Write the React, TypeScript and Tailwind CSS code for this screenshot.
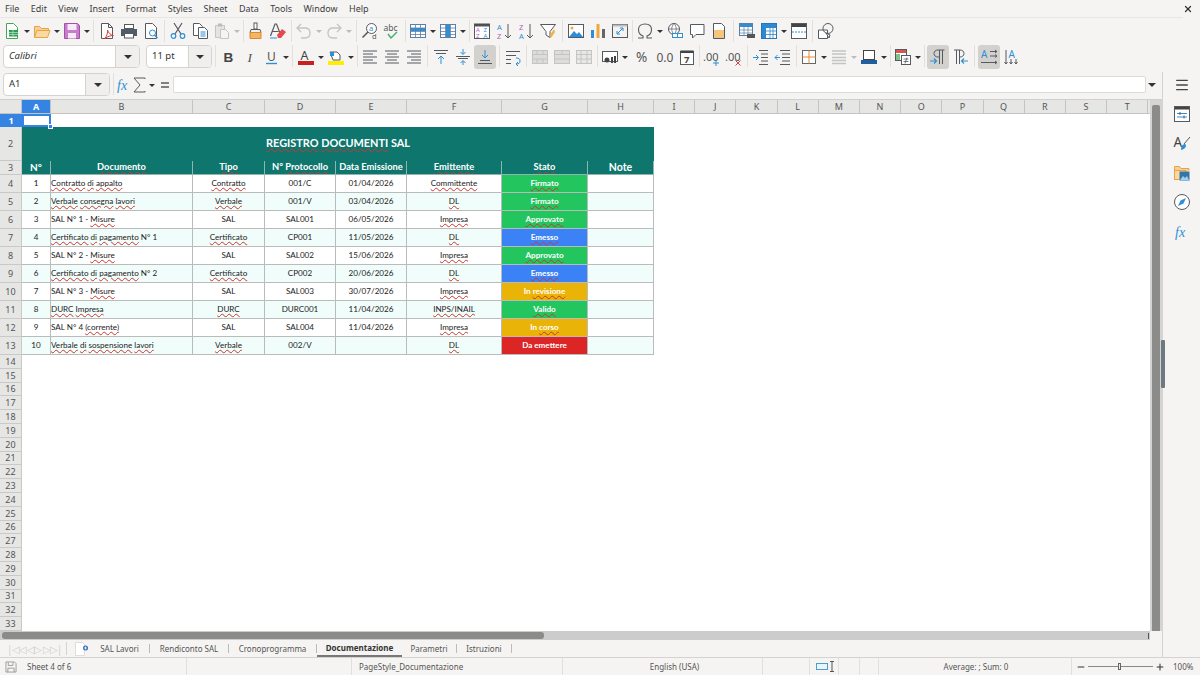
import React from 'react';
import { X, Menu, Minus, Plus } from 'lucide-react';

const ui = 'font-["Noto_Sans",sans-serif]';
const calibri = 'font-["Lato","Noto_Sans",sans-serif]';
const BLUE = '#2f8fd6';
const GRAY = '#555a60';
const PALE = '#c4c4c2';

const rect = (x: number, y: number, w: number, h: number, fill: string, stroke = 'none') => (
  <rect x={x} y={y} width={w} height={h} fill={fill} stroke={stroke} />
);

const grid = (hi: 'row' | 'col' | 'none', color = '#5a7fa8') => (
  <>
    {rect(1.5, 2.5, 15, 13, '#fff', color)}
    {hi === 'row' && rect(2, 6, 14, 3, BLUE)}
    {hi === 'col' && rect(7, 3, 4, 12, BLUE)}
    <path d="M1.5 6h15M1.5 9.500h15M1.500 12.500h15M6.500 2.500v13M11.500 2.500v13" stroke={color} fill="none" strokeWidth=".8" />
  </>
);

const lines = (ys: number[], xs: [number, number][], c = GRAY) => (
  <path d={ys.map((y, i) => `M${xs[i][0]} ${y}H${xs[i][1]}`).join('')} stroke={c} fill="none" />
);

const icons: Record<string, React.ReactNode> = {
  new: <><path d="M3.500 1.500h7l4 4v11h-11z" fill="#fff" stroke="#46a35a" />{rect(6, 8, 9, 6.500, '#2f9e52')}<path d="M6 10.500h9M6 12.500h9M10 8v6.500" stroke="#bfe8c8" strokeWidth=".7" /></>,
  open: <><path d="M1.500 15.500v-11h5l2 2h7v2" fill="#f7cf91" stroke="#e5a449" /><path d="M1.500 15.500l2.500-7h13l-2.500 7z" fill="#fbd9a3" stroke="#e5a449" /></>,
  save: <><path d="M1.500 1.500h13l2 2v13h-15z" fill="#c77dcb" stroke="#a450aa" />{rect(4.500, 2, 9, 6, '#f8eaf8')}{rect(5, 11, 8, 5.500, '#f8eaf8')}</>,
  pdf: <><path d="M3.500 1.500h7l4 4v11h-11z" fill="#fff" stroke={GRAY} /><path d="M10.500 1.500v4h4" fill="none" stroke={GRAY} /><path d="M7 16c2-2 3-6 2.500-8 1 3 3 5 6 5.500-3 0-6 1-8.500 3z" fill="none" stroke="#d9413e" /></>,
  print: <>{rect(4.500, 2.500, 9, 4, '#fff', GRAY)}<path d="M1 7h16v7h-3v-2H4v2H1z" fill="#4f5c68" />{rect(4.500, 11.500, 9, 4.500, '#fff', GRAY)}</>,
  preview: <><path d="M3.500 1.500h7l4 4v11h-11z" fill="#fff" stroke={GRAY} /><circle cx="10.500" cy="11" r="3" fill="#fff" stroke={BLUE} /><path d="M12.500 13l3 3" stroke={BLUE} strokeWidth="1.500" /></>,
  cut: <><path d="M5 1l7 11M13 1L6 12" stroke={GRAY} strokeWidth="1.200" /><circle cx="4.500" cy="14" r="2.300" fill="none" stroke={BLUE} strokeWidth="1.200" /><circle cx="13.500" cy="14" r="2.300" fill="none" stroke={BLUE} strokeWidth="1.200" /></>,
  copy: <><path d="M2.500 1.500h6l3 3v9h-9z" fill="#fff" stroke={GRAY} /><path d="M7.500 5.500h6l3 3v8h-9z" fill="#fff" stroke={GRAY} /><path d="M9.500 10h5M9.500 12h5M9.500 14h5" stroke={BLUE} /></>,
  paste: <><path d="M2.500 3.500h9v12h-9z" fill="#e4e4e2" stroke={PALE} />{rect(5, 1.500, 4, 3, '#bbb')}<path d="M7.500 7.500h5l3 3v6h-8z" fill="#f4f4f2" stroke={PALE} /></>,
  clone: <>{rect(7, 1, 3, 6, '#fff', GRAY)}<path d="M4 7.500h9l1 3H3z" fill="#f4f0e8" stroke={GRAY} /><path d="M3 10.500h11v6H3z" fill="#f4b565" stroke="#d98b2b" /></>,
  clear: <><path d="M1.500 14L6 2h1.500L11 11M3.500 9.500h6" fill="none" stroke={GRAY} strokeWidth="1.200" /><path d="M8 13l5-6 4 3-5 6H9z" fill="#e5484d" /><path d="M1 16h7" stroke={BLUE} /></>,
  undo: <path d="M6 2L2 6l4 4M2 6h8c3 0 5 2 5 5s-2 5-5 5H6" fill="none" stroke={PALE} strokeWidth="1.300" />,
  redo: <path d="M12 2l4 4-4 4M16 6H8c-3 0-5 2-5 5s2 5 5 5h4" fill="none" stroke={PALE} strokeWidth="1.300" />,
  find: <><circle cx="10.500" cy="6.500" r="5" fill="#fff" stroke={GRAY} /><path d="M7 10l-5.500 5.500" stroke={GRAY} strokeWidth="1.600" /><text x="8" y="9" fontSize="7.500" fill={BLUE} fontFamily="Noto Sans">a</text><text x="11" y="17" fontSize="7.500" fill={GRAY} fontFamily="Noto Sans">d</text></>,
  spell: <><text x="0.500" y="9" fontSize="8.500" fill={GRAY} fontFamily="Noto Sans">abc</text><path d="M5 12l3 4 6-6" fill="none" stroke="#3fae6a" strokeWidth="1.400" /></>,
  rows: grid('row'),
  cols: grid('col'),
  sortcol: <>{rect(1, 1.500, 16, 3, '#4d4d4d')}{rect(1.500, 4, 15, 12.500, '#fff', GRAY)}<text x="3" y="10" fontSize="6" fill="#b558c0" fontFamily="Noto Sans">A</text><text x="3" y="16" fontSize="6" fill="#b558c0" fontFamily="Noto Sans">Z</text><text x="10.500" y="10" fontSize="6" fill={BLUE} fontFamily="Noto Sans">Z</text><text x="10.500" y="16" fontSize="6" fill={BLUE} fontFamily="Noto Sans">A</text></>,
  az: <><text x="2" y="8" fontSize="7.500" fill={BLUE} fontFamily="Noto Sans">A</text><text x="2" y="16.500" fontSize="7.500" fill="#b558c0" fontFamily="Noto Sans">Z</text><path d="M13 2v14M10 13l3 3 3-3" fill="none" stroke={GRAY} /></>,
  za: <><text x="2" y="8" fontSize="7.500" fill="#b558c0" fontFamily="Noto Sans">Z</text><text x="2" y="16.500" fontSize="7.500" fill={BLUE} fontFamily="Noto Sans">A</text><path d="M13 2v14M10 13l3 3 3-3" fill="none" stroke={GRAY} /></>,
  filter: <><path d="M1.500 2.500h15l-5.500 7v6l-4-2.500V9.500z" fill="#fff" stroke={GRAY} /><path d="M15 7l-4 6 1 3 4-6z" fill="#f3b23f" /></>,
  image: <>{rect(1.500, 2.500, 15, 13, '#fff', GRAY)}<path d="M2 15l5-6 3 3 2-2 4 5z" fill={BLUE} /><circle cx="5" cy="6" r="1.500" fill="#f2a93b" /></>,
  chart: <>{rect(2, 8, 3, 8, BLUE)}{rect(7.500, 2, 3, 14, '#f0a63c')}{rect(13, 7, 3, 9, '#666')}</>,
  pivot: <>{rect(1.500, 2.500, 15, 13, '#f3f3f2', GRAY)}{rect(1.500, 2.500, 15, 2, '#bbb')}<path d="M6 12l6-6M12 6H9M12 6v3M6 12h3M6 12V9" fill="none" stroke={BLUE} /></>,
  omega: <path d="M2 16h5v-2c-3-1-4.500-3.500-4.500-6.500C2.500 4 5 2 9 2s6.500 2 6.500 5.500c0 3-1.500 5.500-4.500 6.500v2h5" fill="none" stroke={GRAY} strokeWidth="1.100" />,
  link: <><circle cx="8" cy="7" r="5.500" fill="#fff" stroke={GRAY} /><path d="M2.500 7h11M8 1.500c-3 3-3 8 0 11M8 1.500c3 3 3 8 0 11" fill="none" stroke={GRAY} strokeWidth=".7" />{rect(6.500, 11.500, 5, 4, '#fff', BLUE)}{rect(11.500, 11.500, 5, 4, '#fff', BLUE)}</>,
  comment: <path d="M2.500 2.500h13.500v10H8l-3.500 3.500V12.500h-2z" fill="#fff" stroke={GRAY} />,
  header: <><path d="M3.500 1.500h8l3 3v12h-11z" fill="#fff" stroke={GRAY} />{rect(4, 8, 10, 8, '#f6c57e')}</>,
  printarea: <>{rect(1.500, 1.500, 13, 12, '#fff', '#5a7fa8')}{rect(2, 2, 12, 3, BLUE)}<path d="M1.500 8h13M1.500 11h13M6 2v11M10 2v11" stroke="#5a7fa8" strokeWidth=".7" /><path d="M9 12h8v4H9z" fill="#555" /></>,
  freeze: <>{rect(1.500, 1.500, 15, 15, '#fff', '#2c75b5')}{rect(2, 2, 14, 4, '#2c88d0')}{rect(2, 2, 4, 14, '#2c88d0')}<path d="M6 9h10M6 12.500h10M10 6v10M13 6v10" stroke="#2c88d0" strokeWidth=".8" /></>,
  split: <>{rect(1.500, 1.500, 15, 15, '#fff', GRAY)}{rect(2, 2, 14, 3, '#444')}<path d="M2 10h14" stroke={BLUE} strokeDasharray="2 1" /></>,
  shapes: <><path d="M1.500 8h9v8.500h-9z" fill="#fff" stroke={GRAY} /><circle cx="11" cy="6.500" r="5" fill="none" stroke={GRAY} /><path d="M9 11l4 2-1 3z" fill="#fff" stroke={GRAY} /></>,
  bold: <text x="3.500" y="14" fontSize="13.500" fontWeight="700" fill="#444" fontFamily="Liberation Sans">B</text>,
  italic: <text x="5.500" y="14" fontSize="13.500" fontStyle="italic" fill="#555" fontFamily="Liberation Serif">I</text>,
  under: <><text x="4" y="12.500" fontSize="12" fill="#555" fontFamily="Noto Sans">U</text><path d="M3 15.500h11" stroke={BLUE} strokeWidth="1.400" /></>,
  fcolor: <><text x="3.500" y="12" fontSize="12.500" fill="#444" fontFamily="Noto Sans">A</text>{rect(1, 13, 16, 4, '#c9211e')}</>,
  hcolor: <><path d="M3 4h7l3 3v5H6z" fill="#fff" stroke={GRAY} />{rect(3, 4, 4, 4, BLUE)}{rect(1, 13, 16, 4, '#ffee00')}</>,
  left: lines([3, 6, 9, 12, 15], [[2, 16], [2, 12], [2, 16], [2, 12], [2, 16]]),
  center: lines([3, 6, 9, 12, 15], [[2, 16], [4, 14], [2, 16], [4, 14], [2, 16]]),
  right: lines([3, 6, 9, 12, 15], [[2, 16], [6, 16], [2, 16], [6, 16], [2, 16]]),
  vtop: <><path d="M2 2.500h14M4 5.500h10" stroke={GRAY} /><path d="M9 16V8M6 11l3-3 3 3" fill="none" stroke={BLUE} /></>,
  vmid: <><path d="M2 8.500h14M4 10.500h10" stroke={GRAY} /><path d="M9 1v5M6.500 4L9 6.500 11.500 4M9 17v-4M6.500 15L9 12.500l2.500 2.500" fill="none" stroke={BLUE} /></>,
  vbot: <><path d="M2 15.500h14M4 12.500h10" stroke={GRAY} /><path d="M9 2v8M6 7l3 3 3-3" fill="none" stroke={BLUE} /></>,
  wrap: <><path d="M2 3.500h14M2 7.500h10M2 11.500h5M2 15.500h5" stroke={GRAY} /><path d="M12 10c3 0 4 1 4 3s-1 3-4 3M14 14l-2 2 2 2" fill="none" stroke={BLUE} /></>,
  merge: <>{rect(1.500, 2.500, 15, 13, '#dcdcda', PALE)}<path d="M1.500 6.500h15M1.500 11h15M6 2.500v4M12 2.500v4M6 11v4.500M12 11v4.500" stroke={PALE} /></>,
  merge2: <>{rect(1.500, 2.500, 15, 13, '#dcdcda', PALE)}<path d="M1.500 6.500h15M1.500 11h15M9 2.500v4" stroke={PALE} /></>,
  merge3: <>{rect(1.500, 2.500, 15, 13, '#e8e8e6', PALE)}<path d="M1.500 6.500h15M1.500 11h15M6 2.500v13M12 2.500v13" stroke={PALE} /></>,
  money: <>{rect(1.500, 3.500, 15, 10, '#fff', GRAY)}<circle cx="6" cy="12" r="2.500" fill="#444" />{rect(10, 9, 2, 6, '#444')}{rect(13, 8, 2, 7, '#444')}</>,
  percent: <text x="2" y="14" fontSize="13.500" fill="#555" fontFamily="Noto Sans">%</text>,
  number: <text x="0.500" y="14" fontSize="12" fill="#555" fontFamily="Noto Sans">0.0</text>,
  date: <>{rect(2.500, 3.500, 13, 13, '#fff', GRAY)}{rect(2.500, 2.500, 13, 2.500, '#444')}<text x="6" y="14.500" fontSize="9.500" fontWeight="700" fill="#444" fontFamily="Noto Sans">7</text></>,
  decadd: <><text x="0" y="13" fontSize="11" fill="#555" fontFamily="Noto Sans">.00</text><path d="M13 12v6M10 15h6" stroke={BLUE} /></>,
  decdel: <><text x="0" y="13" fontSize="11" fill="#555" fontFamily="Noto Sans">.00</text><path d="M10.500 12.500l5 5M15.500 12.500l-5 5" stroke="#d9413e" /></>,
  indent: <><path d="M7 2.500h9M9 6h7M9 9.500h7M9 13h7M7 16.500h9" stroke={GRAY} /><path d="M1 9.500h5M4 7l2.500 2.500L4 12" fill="none" stroke={BLUE} /></>,
  outdent: <><path d="M2 2.500h10M4 6h8M4 9.500h8M4 13h8M2 16.500h10" stroke={GRAY} transform="translate(4 0)" /><path d="M6 9.500H1M3.500 7L1 9.500 3.500 12" fill="none" stroke={BLUE} /></>,
  border: <>{rect(2.500, 2.500, 13, 13, '#fff', '#666')}<path d="M9 2.500v13M2.500 9h13" stroke="#e58a3a" /></>,
  bstyle: <path d="M2 3h14M2 6h14M2 9.500h14M2 12.500h14M2 15.500h14" stroke={PALE} strokeWidth="1.300" />,
  bcolor: <>{rect(3.500, 2.500, 11, 9, '#fff', '#444')}{rect(1, 12, 16, 4, '#1f5fa0')}</>,
  cond: <>{rect(1.500, 1.500, 11, 11, '#fff', GRAY)}{rect(2, 2, 10, 3, '#d9534f')}{rect(2, 6, 4, 6, '#7cc48a')}{rect(7.500, 7.500, 9, 9, '#fff', GRAY)}<path d="M9.500 11h5M9.500 13.500h5M13 9.500l-2 6" stroke={GRAY} strokeWidth=".8" /></>,
  ltr: <><path d="M10.500 2v14M13.500 2v14M15.500 2H9c-2.500 0-4 1.500-4 3.500S6.500 9 9 9h1.500" fill="none" stroke={GRAY} /><path d="M1 13h6M5 10.500L7.500 13 5 15.500" fill="none" stroke={BLUE} strokeWidth="1.200" /></>,
  rtl: <><path d="M8.500 2v14M5.500 2v14M3 2h6c2.500 0 4 1.500 4 3.500S11.500 9 9 9" fill="none" stroke={GRAY} /><path d="M17 13h-6M13 10.500L10.500 13l2.500 2.500" fill="none" stroke={BLUE} strokeWidth="1.200" /></>,
  horiz: <><text x="1" y="10" fontSize="10" fill={BLUE} fontFamily="Noto Sans">A</text><path d="M10 3.500h7M10 8h7M1 14.500h16M15 2l2 1.500L15 5M15 6.500L17 8l-2 1.500M15 13l2 1.500-2 1.500" fill="none" stroke={GRAY} /></>,
  vert: <><text x="6.500" y="10" fontSize="10" fill={BLUE} fontFamily="Noto Sans">A</text><path d="M4 2v14M2.500 14L4 16l1.500-2M9 11v5M7.500 14L9 16l1.500-2M14 11v5M12.500 14l1.500 2 1.500-2" fill="none" stroke={GRAY} /></>,
  fx: <text x="2" y="14" fontSize="14" fontStyle="italic" fill={BLUE} fontFamily="Liberation Serif">fx</text>,
  sum: <path d="M14 3V2H3l6 7-6 7h11v-1" fill="none" stroke={GRAY} />,
  equals: <path d="M5 7h8M5 11h8" stroke={GRAY} strokeWidth="1.500" />,
  props: <>{rect(1.500, 1.500, 15, 15, '#fff', GRAY)}{rect(2, 2, 14, 2.500, '#444')}<path d="M4 8.500h10M4 12h10" stroke={BLUE} /><path d="M7 7v3M11 10.500v3" stroke={GRAY} /></>,
  styles: <><text x="0.500" y="13" fontSize="13.500" fill="#444" fontFamily="Noto Sans">A</text><path d="M17 3l-6 7" stroke={GRAY} /><path d="M8 16c0-4 2-6 4-6 2 1 1 5-4 6z" fill={BLUE} /></>,
  gallery: <><path d="M1.500 15.500v-13h5l1.500 2h8v2" fill="#f7cf91" stroke="#e5a449" />{rect(1.500, 6.500, 11, 9, '#fbd9a3', '#e5a449')}{rect(6.500, 7.500, 10, 9, '#3377aa')}<path d="M7 16l3-4 2 2 2-2 2 4z" fill="#9fd0ee" /></>,
  nav: <><circle cx="9" cy="9" r="7.500" fill="#fff" stroke={GRAY} /><path d="M13 5l-2.500 5.500L5 13l2.500-5.500z" fill={BLUE} /></>,
  floppy: <><path d="M2.500 2.500h11l2 2v11h-13z" fill="none" stroke="#8a8a88" /><path d="M5.500 3v4h6V3M5 15.500v-5h8v5" fill="none" stroke="#8a8a88" /></>,
};

function Ic({ n, size = 18 }: { n: string; size?: number }) {
  return <svg width={size} height={size} viewBox="0 0 18 18" className="shrink-0">{icons[n]}</svg>;
}

function Btn({ n, on, w = 22 }: { n: string; on?: boolean; w?: number }) {
  return (
    <div style={{ width: w }} className={`h-[24px] flex items-center justify-center shrink-0 rounded-[3px] ${on ? 'bg-[#d3d1ce]' : ''}`}>
      <Ic n={n} />
    </div>
  );
}

function Dd({ pale }: { pale?: boolean }) {
  return (
    <div className="w-[8px] h-[24px] flex items-center justify-center shrink-0">
      <div className={`w-0 h-0 border-x-[3px] border-x-transparent border-t-[3px] ${pale ? 'border-t-[#bbb]' : 'border-t-[#333]'}`} />
    </div>
  );
}

function Sep({ w = 5 }: { w?: number }) {
  return (
    <div style={{ width: w }} className="h-[22px] flex justify-center shrink-0">
      <div className="w-px h-full bg-[#e2e0dd]" />
    </div>
  );
}

function Combo({ label, italic, cls, btn }: { label: string; italic?: boolean; cls: string; btn: string }) {
  return (
    <div className={`${cls} h-[23px] flex shrink-0 border border-[#d5d3cf] rounded-[4px] overflow-hidden bg-white`}>
      <div className={`flex-1 flex items-center pl-[5px] text-[9.500px] text-[#333] ${italic ? 'italic' : ''}`}>{label}</div>
      <div className={`${btn} bg-[#f0efed] border-l border-[#d5d3cf] flex items-center justify-center`}>
        <div className="w-0 h-0 border-x-[4px] border-x-transparent border-t-[4px] border-t-[#333]" />
      </div>
    </div>
  );
}

// ~ in front of a word puts the spell check underline on it
function Words({ t }: { t: string }) {
  return (
    <>
      {t.split(' ').map((w, i) => (
        <React.Fragment key={i}>
          {i > 0 && ' '}
          {w.startsWith('~')
            ? <span className="underline decoration-wavy decoration-[#d0342c] decoration-1 underline-offset-[1px]">{w.slice(1)}</span>
            : w}
        </React.Fragment>
      ))}
    </>
  );
}

const MENU = ['File', 'Edit', 'View', 'Insert', 'Format', 'Styles', 'Sheet', 'Data', 'Tools', 'Window', 'Help'];
const LETTERS = ['I', 'J', 'K', 'L', 'M', 'N', 'O', 'P', 'Q', 'R', 'S', 'T'];

const GREEN = 'bg-[#22c55e]';
const BLUEC = 'bg-[#3b82f6]';
const AMBER = 'bg-[#eab308]';
const RED = 'bg-[#dc2626]';

const ROWS = [
  ['~Contratto ~di ~appalto', '~Contratto', '001/C', '01/04/2026', '~Committente', '~Firmato', GREEN],
  ['~Verbale ~consegna ~lavori', '~Verbale', '001/V', '03/04/2026', '~DL', '~Firmato', GREEN],
  ['SAL N° 1 - ~Misure', 'SAL', 'SAL001', '06/05/2026', '~Impresa', '~Approvato', GREEN],
  ['~Certificato ~di ~pagamento N° 1', '~Certificato', 'CP001', '11/05/2026', '~DL', '~Emesso', BLUEC],
  ['SAL N° 2 - ~Misure', 'SAL', 'SAL002', '15/06/2026', '~Impresa', '~Approvato', GREEN],
  ['~Certificato ~di ~pagamento N° 2', '~Certificato', 'CP002', '20/06/2026', '~DL', '~Emesso', BLUEC],
  ['SAL N° 3 - ~Misure', 'SAL', 'SAL003', '30/07/2026', '~Impresa', 'In ~revisione', AMBER],
  ['~DURC ~Impresa', '~DURC', 'DURC001', '11/04/2026', '~INPS/INAIL', '~Valido', GREEN],
  ['SAL N° 4 ~(corrente)', 'SAL', 'SAL004', '11/04/2026', '~Impresa', 'In ~corso', AMBER],
  ['~Verbale ~di ~sospensione ~lavori', '~Verbale', '002/V', '', '~DL', 'Da emettere', RED],
];

const TEMPLATE = 'grid grid-cols-[22px_29px_142px_72px_71px_71px_95px_86px_66px] grid-rows-[minmax(0,1fr)]';
const rowHead = 'bg-[#e6e6e4] border-r border-b border-[#c9c9c7] flex items-center justify-center leading-none text-[#555] text-[9px]';
const cell = 'border-r border-b border-[#b9bcbb] flex items-center justify-center leading-none pb-px text-[8.100px] text-[#222] whitespace-nowrap overflow-hidden';
const headCell = 'bg-[#0f766e] border-r border-b border-[#8fb5b1] flex items-center justify-center leading-none pb-px text-white font-bold text-[9.300px] whitespace-nowrap overflow-hidden';

function ColHead({ l, cls, on }: { l: string; cls: string; on?: boolean }) {
  return (
    <div className={`${cls} shrink-0 border-r border-[#c4c4c2] flex items-center justify-center pt-px ${on ? 'bg-[#3584e4] text-white font-bold' : ''}`}>{l}</div>
  );
}

export default function App() {
  return (
    <div className={`${ui} w-[1200px] h-[675px] bg-[#f5f4f2] flex flex-col overflow-hidden text-[#444]`}>
      {/* menu */}
      <div className="h-[17px] flex items-center shrink-0 pl-[5px] pr-[7px] text-[9px] gap-[11.400px] text-[#3d3d3d]">
        {MENU.map(m => <span key={m}>{m}</span>)}
        <X size={10} strokeWidth={3} className="ml-auto text-[#333]" />
      </div>

      {/* standard toolbar */}
      <div className="h-[27px] flex items-center shrink-0 pl-px mr-[17px] border-t border-[#e8e6e3]">
        <Btn n="new" /><Dd /><Btn n="open" /><Dd /><Btn n="save" /><Dd /><Sep />
        <Btn n="pdf" /><Btn n="print" /><Btn n="preview" /><Sep />
        <Btn n="cut" /><Btn n="copy" /><Btn n="paste" /><Dd pale /><Sep w={4} />
        <Btn n="clone" /><Btn n="clear" /><Sep w={4} />
        <Btn n="undo" /><Dd pale /><Btn n="redo" /><Dd pale /><Sep w={6} />
        <Btn n="find" /><Btn n="spell" /><Sep w={4} />
        <Btn n="rows" /><Dd /><Btn n="cols" /><Dd /><Sep w={4} />
        <Btn n="sortcol" /><Btn n="az" /><Btn n="za" /><Btn n="filter" /><Sep w={6} />
        <Btn n="image" /><Btn n="chart" /><Btn n="pivot" /><Sep w={3} />
        <Btn n="omega" /><Dd /><Btn n="link" /><Btn n="comment" /><Btn n="header" /><Sep w={6} />
        <Btn n="printarea" /><Btn n="freeze" /><Dd /><Btn n="split" /><Sep />
        <Btn n="shapes" />
      </div>

      {/* formatting toolbar */}
      <div className="h-[28px] flex items-start pt-px shrink-0 pl-[3px]">
        <Combo label="Calibri" italic cls="w-[137px]" btn="w-[24px]" />
        <div className="w-[6px] shrink-0" />
        <Combo label="11 pt" cls="w-[66px]" btn="w-[23px]" />
        <Sep w={6} />
        <Btn n="bold" /><Btn n="italic" /><Btn n="under" w={20} /><Dd /><Sep w={5} />
        <Btn n="fcolor" /><Dd /><Btn n="hcolor" /><Dd /><Sep w={4} />
        <Btn n="left" /><Btn n="center" /><Btn n="right" /><Sep w={5} />
        <Btn n="vtop" /><Btn n="vmid" /><Btn n="vbot" on /><Sep w={6} />
        <Btn n="wrap" /><Sep w={5} />
        <Btn n="merge" /><Btn n="merge2" /><Btn n="merge3" /><Sep w={4} />
        <Btn n="money" /><Dd /><div className="w-[3px] shrink-0" /><Btn n="percent" /><Btn n="number" /><Btn n="date" /><Sep w={3} />
        <Btn n="decadd" /><Btn n="decdel" /><Sep w={5} />
        <Btn n="indent" /><Btn n="outdent" /><Sep w={4} />
        <Btn n="border" /><Dd /><Btn n="bstyle" /><Dd pale /><Btn n="bcolor" /><Dd /><Sep w={4} />
        <Btn n="cond" /><Dd /><Sep w={5} />
        <Btn n="ltr" on /><Btn n="rtl" /><Sep w={7} />
        <Btn n="horiz" on /><Btn n="vert" />
      </div>

      <div className="flex-1 flex min-h-0">
        <div className="flex-1 flex flex-col min-w-0">
          {/* formula bar */}
          <div className="h-[28px] shrink-0 flex items-start pt-px pl-[3px] border-b border-[#d0cfcc]">
            <Combo label="A1" cls="w-[107px]" btn="w-[24px]" />
            <Sep w={6} />
            <Btn n="fx" w={16} />
            <Btn n="sum" w={16} /><Dd />
            <Btn n="equals" w={18} />
            <div className="w-[973px] h-[17px] mt-[3px] ml-[-1px] bg-white border border-[#dddcd9] rounded-[2px] shrink-0" />
            <div className="w-[12px] h-[23px] flex items-center justify-center shrink-0">
              <div className="w-0 h-0 border-x-[4px] border-x-transparent border-t-[4px] border-t-[#333]" />
            </div>
          </div>

          {/* sheet */}
          <div className="flex-1 flex min-h-0">
            <div className={`${calibri} w-[1150px] shrink-0 bg-white overflow-hidden`}>
              <div className={`${ui} h-[14px] flex bg-[#e6e6e4] border-b border-[#c4c4c2] text-[9px] text-[#555]`}>
                <ColHead l="" cls="w-[22px]" />
                <ColHead l="A" cls="w-[29px]" on />
                <ColHead l="B" cls="w-[142px]" />
                <ColHead l="C" cls="w-[72px]" />
                <ColHead l="D" cls="w-[71px]" />
                <ColHead l="E" cls="w-[71px]" />
                <ColHead l="F" cls="w-[95px]" />
                <ColHead l="G" cls="w-[86px]" />
                <ColHead l="H" cls="w-[66px]" />
                {LETTERS.map(l => <ColHead key={l} l={l} cls="w-[41.200px]" />)}
              </div>

              <div className={`${TEMPLATE} h-[13px]`}>
                <div className={`${ui} bg-[#3584e4] text-white font-bold text-[9px] leading-none flex items-center justify-center`}>1</div>
                <div className="relative border-2 border-[#3584e4]">
                  <div className="absolute right-[-4px] bottom-[-4px] w-[5px] h-[5px] bg-[#3584e4] border border-white" />
                </div>
              </div>

              <div className={`${TEMPLATE} h-[34px]`}>
                <div className={`${ui} ${rowHead}`}>2</div>
                <div className="col-span-8 bg-[#0f766e] flex items-center justify-center pb-[2px] text-white font-bold text-[10.900px]">
                  <span><Words t="~REGISTRO ~DOCUMENTI SAL" /></span>
                </div>
              </div>

              <div className={`${TEMPLATE} h-[14px]`}>
                <div className={`${ui} ${rowHead}`}>3</div>
                <div className={`${headCell} text-[10px]`}>N°</div>
                <div className={headCell}><span><Words t="~Documento" /></span></div>
                <div className={headCell}><span><Words t="~Tipo" /></span></div>
                <div className={headCell}><span><Words t="N° ~Protocollo" /></span></div>
                <div className={headCell}>Data Emissione</div>
                <div className={headCell}><span><Words t="~Emittente" /></span></div>
                <div className={headCell}><span><Words t="~Stato" /></span></div>
                <div className={`${headCell} text-[10.500px]`}>Note</div>
              </div>

              {ROWS.map((r, i) => {
                const tint = i % 2 ? 'bg-[#f0fdfa]' : '';
                return (
                  <div key={i} className={`${TEMPLATE} h-[18px]`}>
                    <div className={`${ui} ${rowHead}`}>{i + 4}</div>
                    <div className={`${cell} ${tint}`}>{i + 1}</div>
                    <div className={`${cell} ${tint} justify-start`}><span><Words t={r[0]} /></span></div>
                    <div className={`${cell} ${tint}`}><span><Words t={r[1]} /></span></div>
                    <div className={`${cell} ${tint}`}>{r[2]}</div>
                    <div className={`${cell} ${tint} text-[7.800px]`}>{r[3]}</div>
                    <div className={`${cell} ${tint}`}><span><Words t={r[4]} /></span></div>
                    <div className={`${cell} ${r[6]} text-white font-bold`}><span><Words t={r[5]} /></span></div>
                    <div className={`${cell} ${tint}`} />
                  </div>
                );
              })}

              {Array.from({ length: 20 }, (_, i) => (
                <div key={i} className={`${TEMPLATE} h-[13.800px]`}>
                  <div className={`${ui} ${rowHead}`}>{i + 14}</div>
                </div>
              ))}
            </div>

            {/* vertical scrollbar */}
            <div className="flex-1 bg-[#d4d4d2] flex justify-center relative">
              <div className="w-[8px] mt-[5px] bg-[#8b8b89] rounded-t-[2px]" />
              <div className="absolute right-[-3px] top-[240px] w-[4px] h-[48px] bg-[#6f7a80] rounded-[1px]" />
            </div>
          </div>

          {/* horizontal scrollbar */}
          <div className="h-[9px] shrink-0 bg-[#cccccc] flex items-center mr-[12px]">
            <div className="w-[542px] ml-[2px] h-[7px] bg-[#8b8b89] rounded-[3px]" />
            <div className="ml-auto mr-[1px] w-px h-[6px] bg-[#555]" />
          </div>

          {/* sheet tabs */}
          <div className="h-[17px] shrink-0 flex items-center text-[8px] text-[#555] whitespace-nowrap">
            <div className="w-[66px] shrink-0 pl-[7px] text-[#d0d0ce] text-[10px] leading-none tracking-[-1px]">|◁◁ ◁▷ ▷▷|</div>
            <div className="w-px h-[13px] bg-[#d5d3d0] shrink-0" />
            <div className="w-[8px] shrink-0" />
            <svg width="15" height="14" viewBox="0 0 15 14" className="shrink-0">
              <path d="M0.500 0.500h7l2 2v11h-9z" fill="#fff" stroke="#ddd" />
              <circle cx="10.500" cy="6" r="2.500" fill="#2f6fb5" />
              <path d="M9 6h3M10.500 4.500v3" stroke="#fff" strokeWidth=".8" />
            </svg>
            <div className="w-[59px] flex justify-center shrink-0">SAL Lavori</div>
            <div className="w-px h-[9px] bg-[#bbb] shrink-0" />
            <div className="w-[78px] text-center shrink-0">Rendiconto SAL</div>
            <div className="w-px h-[9px] bg-[#bbb] shrink-0" />
            <div className="w-[87px] text-center shrink-0">Cronoprogramma</div>
            <div className="w-px h-[9px] bg-[#bbb] shrink-0" />
            <div className="w-[85px] h-full flex items-center justify-center shrink-0 font-bold text-[#333] border-b-2 border-[#77767b]">Documentazione</div>
            <div className="w-[54px] text-center shrink-0">Parametri</div>
            <div className="w-px h-[9px] bg-[#bbb] shrink-0" />
            <div className="w-[54px] text-center shrink-0">Istruzioni</div>
            <div className="w-px h-[9px] bg-[#bbb] shrink-0" />
          </div>
        </div>

        {/* sidebar */}
        <div className="w-[38px] shrink-0 border-l border-[#d5d3d0] flex flex-col items-center pt-[5px] gap-[11.500px]">
          <Menu size={16} strokeWidth={2} className="text-[#444]" />
          <Ic n="props" />
          <Ic n="styles" />
          <Ic n="gallery" />
          <Ic n="nav" />
          <Ic n="fx" />
        </div>
      </div>

      {/* status bar */}
      <div className="h-[18px] shrink-0 border-t border-[#d5d3d0] flex items-center text-[8px] text-[#555] whitespace-nowrap">
        <div className="w-[187px] flex items-center shrink-0 pl-[4px] gap-[6px] border-r border-[#e2e0dd] h-full">
          <Ic n="floppy" size={14} />
          <span className="ml-[3px]">Sheet 4 of 6</span>
        </div>
        <div className="w-[165px] h-full shrink-0 border-r border-[#e2e0dd]" />
        <div className="w-[211px] h-full shrink-0 pl-[7px] flex items-center border-r border-[#e2e0dd]">PageStyle_Documentazione</div>
        <div className="w-[200px] h-full shrink-0 flex items-center justify-center border-r border-[#e2e0dd]"><span className="ml-[24px]">English (USA)</span></div>
        <div className="w-[47px] h-full shrink-0 border-r border-[#e2e0dd]" />
        <div className="w-[29px] h-full shrink-0 pl-[6px] flex items-center gap-[1px] border-r border-[#e2e0dd]">
          <div className="w-[12px] h-[7px] border border-[#4a9ed0] bg-[#eaf4fa] shrink-0" />
          <svg width="6" height="11" viewBox="0 0 6 11" className="shrink-0"><path d="M1 .5h4M1 10.500h4M3 .5v10" stroke="#555" fill="none" /></svg>
        </div>
        <div className="w-[21px] h-full shrink-0 border-r border-[#e2e0dd]" />
        <div className="w-[19px] h-full shrink-0 border-r border-[#e2e0dd]" />
        <div className="w-[193px] h-full shrink-0 flex items-center justify-center border-r border-[#e2e0dd]"><span className="ml-[2px]">Average: ; Sum: 0</span></div>
        <div className="flex-1 flex items-center pl-[4px]">
          <Minus size={10} strokeWidth={2.500} className="text-[#333] shrink-0" />
          <div className="w-[65px] h-px bg-[#888] mx-[2px] relative shrink-0">
            <div className="absolute left-[30px] top-[-3px] w-[3px] h-[7px] border border-[#666] bg-[#eee]" />
          </div>
          <Plus size={10} strokeWidth={2.500} className="text-[#333] shrink-0" />
          <span className="ml-[8px]">100%</span>
        </div>
      </div>
    </div>
  );
}
